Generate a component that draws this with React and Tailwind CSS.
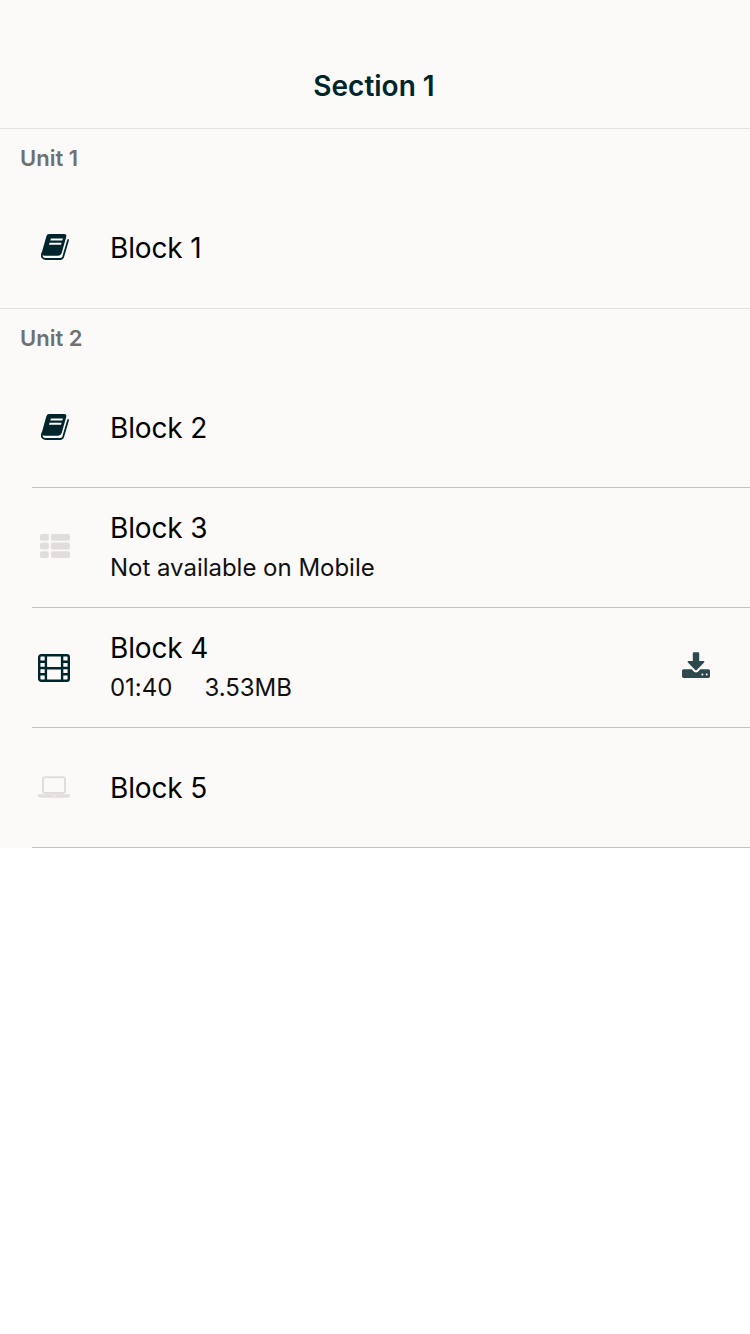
function BookIcon() {
  return (
    <svg viewBox="0 0 28 26" className="mb-px ml-0.5 h-[26px] w-7 fill-[#00262b]">
      <path
        fillRule="evenodd"
        d="M8 .1H23.100Q26 .1 25.200 3L20.700 19Q19.900 21.700 17 21.700H3.500Q1.400 21.700.900 19.500Q.7 18.700 1.100 17.500L5.300 2.500Q6 .1 8 .1ZM9.900 4.500L9.300 6.500H21.300L21.900 4.500ZM8.600 8.800L8 10.800H20L20.600 8.800Z"
      />
      <path d="M1.300 18.800Q-.4 25 4.600 25H19.300Q21.500 25 22.200 22.800L26.900 6.800Q27.100 6 26.800 5.300" className="fill-none stroke-[#00262b] stroke-[1.800]" />
    </svg>
  );
}

function ListIcon() {
  return (
    <svg viewBox="0 0 30 24" className="mb-[3px] ml-0.5 h-6 w-[30px] fill-[#e1dddb]">
      {[0, 8.6, 17.2].map((y) => (
        <g key={y}>
          <rect x="0" y={y} width="8.8" height="6.8" rx="1.7" />
          <rect x="11" y={y} width="19" height="6.8" rx="1.7" />
        </g>
      ))}
    </svg>
  );
}

function FilmIcon() {
  return (
    <svg viewBox="0 0 32 28" className="h-7 w-8 fill-none stroke-[#00262b] stroke-[2.4]">
      <rect x="1.200" y="1.200" width="29.600" height="25.600" rx="2" />
      <path d="M7.900 1v26M24.100 1v26M8 14.300h16M1 7.700h7M1 14h7M1 20.300h7M24 7.700h7M24 14h7M24 20.300h7" />
    </svg>
  );
}

function LaptopIcon() {
  return (
    <svg viewBox="0 0 32 22" className="mb-0.5 h-[22px] w-8">
      <rect x="5" y="1.200" width="22" height="15.800" rx="2.200" className="fill-none stroke-[#e1dddb] stroke-2" />
      <path d="M0 18.300h32v1.200q0 2.200-3 2.200H3q-3 0-3-2.200z" className="fill-[#e1dddb]" />
      <path d="M14.500 20h3" className="stroke-[#fbfaf9] stroke-[0.800]" />
    </svg>
  );
}

function DownloadIcon() {
  return (
    <svg viewBox="0 0 28 26" className="mr-10 mb-[5px] h-[26px] w-7 fill-[#2d494e]">
      <path d="M11.800.2h4.400q1 0 1 1v7.700h4.300q1.700.2.600 1.600l-7.300 7.400q-.8.700-1.600 0L5.900 10.500q-1.100-1.400.6-1.600h4.300V1.200q0-1 1-1z" />
      <path
        fillRule="evenodd"
        d="M1.600 17.200h8l2.500 2.500q1.900 1.600 3.800 0l2.500-2.500h8q1.600 0 1.600 1.600v5.500q0 1.600-1.600 1.600H1.600Q0 25.900 0 24.300v-5.500q0-1.600 1.600-1.600zM20.400 21.500a1 1 0 1 0 0 2 1 1 0 0 0 0-2zM24.700 21.500a1 1 0 1 0 0 2 1 1 0 0 0 0-2z"
      />
    </svg>
  );
}

function Unit({ children }) {
  return <div className="h-[59px] pl-5 text-[22px] leading-[58px] font-semibold text-[#707070]">{children}</div>;
}

function Block({ icon, title, detail, action, divided = true }) {
  return (
    <div className="flex h-[120px] pl-8">
      <div className={divided ? "flex w-full items-center border-b border-[#c1c1c0]" : "flex w-full items-center border-b border-transparent"}>
        <div className="flex w-11 justify-center">{icon}</div>
        <div className="ml-[34px] flex grow flex-col">
          <div className="text-[28px] leading-10 tracking-[-0.15px] text-black">{title}</div>
          {detail && <div className="flex gap-8 text-[24px] leading-10 tracking-[-0.02px] text-[#111]">{detail}</div>}
        </div>
        {action}
      </div>
    </div>
  );
}

export default function App() {
  return (
    <div className="min-h-screen w-[750px] bg-white font-['Inter',sans-serif]">
      <div className="bg-[#fbfaf9]">
        <header className="h-[129px] border-b border-[#e2e2e1] pt-[66px] pr-0.5 text-center text-[28px] leading-10 font-semibold text-[#00262b]">Section 1</header>
        <Unit>Unit 1</Unit>
        <div className="border-b border-[#e0e0df]">
          <Block icon={<BookIcon />} title="Block 1" divided={false} />
        </div>
        <Unit>Unit 2</Unit>
        <Block icon={<BookIcon />} title="Block 2" />
        <Block icon={<ListIcon />} title="Block 3" detail="Not available on Mobile" />
        <Block icon={<FilmIcon />} title="Block 4" detail={<><span>01:40</span><span>3.53MB</span></>} action={<DownloadIcon />} />
        <Block icon={<LaptopIcon />} title="Block 5" />
      </div>
    </div>
  );
}
